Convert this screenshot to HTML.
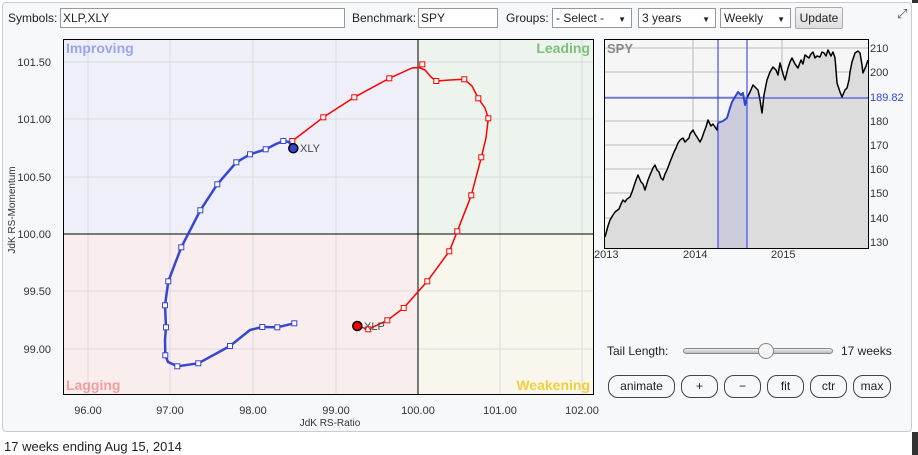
<!DOCTYPE html>
<html><head><meta charset="utf-8"><style>
*{margin:0;padding:0;box-sizing:border-box}
body{width:918px;height:455px;background:#fff;font-family:"Liberation Sans",Arial,sans-serif;position:relative;overflow:hidden;color:#222}
.panel{position:absolute;left:2px;top:2px;width:910px;height:430px;background:#f7f8fa;border:1px solid #ccc;border-radius:4px}
.abs{position:absolute;font-size:12px}
.inp{position:absolute;height:20px;border:1px solid #999;background:#fff;font-size:12px;padding:2px 2px;line-height:14px}
.sel{position:absolute;height:20px;border:1px solid #999;background:#fff;font-size:12px;padding:2px 3px;line-height:14px}
.sel:after{content:"▼";position:absolute;right:5px;top:4px;font-size:8px}
.btn{position:absolute;top:375px;height:23px;border:1px solid #444;border-radius:10px;background:#f7f8fa;font-size:12px;text-align:center;line-height:21px}
</style></head><body>
<div class="panel"></div>
<div style="position:absolute;right:0;top:0;width:6px;height:3px;background:#333"></div>
<div style="position:absolute;left:912px;top:432px;width:6px;height:23px;background:#333"></div>
<div class="abs" style="left:8px;top:11px">Symbols:</div>
<div class="inp" style="left:60px;top:8px;width:285px">XLP,XLY</div>
<div class="abs" style="left:352px;top:11px">Benchmark:</div>
<div class="inp" style="left:418px;top:8px;width:80px">SPY</div>
<div class="abs" style="left:506px;top:11px">Groups:</div>
<div class="sel" style="left:552px;top:8px;width:80px">- Select -</div>
<div class="sel" style="left:638px;top:8px;width:78px">3 years</div>
<div class="sel" style="left:720px;top:8px;width:71px">Weekly</div>
<div style="position:absolute;left:795px;top:7px;width:48px;height:22px;border:1px solid #aaa;border-radius:2px;background:linear-gradient(#f4f4f4,#ddd);font-size:12px;text-align:center;line-height:20px">Update</div>
<div class="abs" style="left:897px;top:6px;font-size:13px;color:#555">⤢</div>

<svg width="918" height="455" style="position:absolute;left:0;top:0" font-family="Liberation Sans,Arial,sans-serif">
<rect x="63" y="39" width="355" height="195" fill="#eeeff8"/>
<rect x="418" y="39" width="175" height="195" fill="#edf4ed"/>
<rect x="63" y="234" width="355" height="160" fill="#f9eded"/>
<rect x="418" y="234" width="175" height="160" fill="#f9f6ee"/>
<g stroke="#dcdcdc" stroke-width="1">
<line x1="88" y1="39" x2="88" y2="394"/><line x1="170" y1="39" x2="170" y2="394"/><line x1="253" y1="39" x2="253" y2="394"/><line x1="336" y1="39" x2="336" y2="394"/><line x1="500" y1="39" x2="500" y2="394"/><line x1="582" y1="39" x2="582" y2="394"/>
<line x1="63" y1="62" x2="593" y2="62"/><line x1="63" y1="119" x2="593" y2="119"/><line x1="63" y1="177" x2="593" y2="177"/><line x1="63" y1="291" x2="593" y2="291"/><line x1="63" y1="349" x2="593" y2="349"/>
</g>
<line x1="418" y1="39" x2="418" y2="394" stroke="#000"/>
<line x1="63" y1="234" x2="593" y2="234" stroke="#000"/>
<rect x="63.5" y="39.5" width="530" height="355" fill="none" stroke="#000"/>
<g font-size="14" font-weight="bold">
<text x="66" y="53" fill="#9aa6e8">Improving</text>
<text x="590" y="53" fill="#7cc07c" text-anchor="end">Leading</text>
<text x="66" y="390" fill="#f59c9c">Lagging</text>
<text x="590" y="390" fill="#f2cf3a" text-anchor="end">Weakening</text>
</g>
<g font-size="11" fill="#333" text-anchor="end">
<text x="51" y="66">101.50</text><text x="51" y="123">101.00</text><text x="51" y="181">100.50</text><text x="51" y="238">100.00</text><text x="51" y="295">99.50</text><text x="51" y="353">99.00</text>
</g>
<g font-size="11" fill="#333" text-anchor="middle">
<text x="88" y="414">96.00</text><text x="170" y="414">97.00</text><text x="253" y="414">98.00</text><text x="336" y="414">99.00</text><text x="418" y="414">100.00</text><text x="500" y="414">101.00</text><text x="582" y="414">102.00</text>
<text x="330" y="426" font-size="10">JdK RS-Ratio</text>
<text transform="translate(15,210) rotate(-90)" font-size="10">JdK RS-Momentum</text>
</g>
<polyline fill="none" stroke="#f00" stroke-width="1.5" stroke-linejoin="round" points="292.3,141 323.3,117.3 354.3,97.3 389.3,78.3 412,68 419,67.5 425,70 431,77 436.3,81 450,80 464.3,79.3 472,86 478.3,98.3 485,108 488.3,118.3 486,138 481.3,157.3 471.3,195.3 457.3,231.3 449.3,251.3 427.3,281.3 403.7,308 387.3,320.3 368.3,329.3 357.3,326"/>
<g fill="#fff" stroke="#f00" stroke-width="1">
<rect x="289.8" y="138.5" width="5" height="5"/><rect x="320.8" y="114.8" width="5" height="5"/><rect x="351.8" y="94.8" width="5" height="5"/><rect x="386.8" y="75.8" width="5" height="5"/><rect x="419.8" y="61.8" width="5" height="5"/><rect x="433.8" y="78.5" width="5" height="5"/><rect x="461.8" y="76.8" width="5" height="5"/><rect x="475.8" y="95.8" width="5" height="5"/><rect x="485.8" y="115.8" width="5" height="5"/><rect x="478.8" y="154.8" width="5" height="5"/><rect x="468.8" y="192.8" width="5" height="5"/><rect x="454.8" y="228.8" width="5" height="5"/><rect x="446.8" y="248.8" width="5" height="5"/><rect x="424.8" y="278.8" width="5" height="5"/><rect x="401.2" y="305.5" width="5" height="5"/><rect x="384.8" y="317.8" width="5" height="5"/><rect x="365.8" y="326.8" width="5" height="5"/>
</g>
<polyline fill="none" stroke="#3447d4" stroke-width="2.5" stroke-linejoin="round" points="294.3,323.3 277.3,327.3 262.3,327 250,330 230,346 198.3,363.3 177.3,366.3 168,362 165.3,355.3 165,340 166,327.3 165,305.3 168.3,281.3 181.3,247.3 200.3,210.3 217.3,184.3 236.3,162.3 250,154.3 265.7,149.3 276,144 283.3,141 289,142 293.3,148.3"/>
<g fill="#fff" stroke="#3447d4" stroke-width="1">
<rect x="291.8" y="320.8" width="5" height="5"/><rect x="274.8" y="324.8" width="5" height="5"/><rect x="259.8" y="324.5" width="5" height="5"/><rect x="227.5" y="343.5" width="5" height="5"/><rect x="195.8" y="360.8" width="5" height="5"/><rect x="174.8" y="363.8" width="5" height="5"/><rect x="162.8" y="352.8" width="5" height="5"/><rect x="163.5" y="324.8" width="5" height="5"/><rect x="162.5" y="302.8" width="5" height="5"/><rect x="165.8" y="278.8" width="5" height="5"/><rect x="178.8" y="244.8" width="5" height="5"/><rect x="197.8" y="207.8" width="5" height="5"/><rect x="214.8" y="181.8" width="5" height="5"/><rect x="233.8" y="159.8" width="5" height="5"/><rect x="247.5" y="151.8" width="5" height="5"/><rect x="263.2" y="146.8" width="5" height="5"/><rect x="280.8" y="138.5" width="5" height="5"/>
</g>
<circle cx="293.3" cy="148.3" r="4.5" fill="#3447d4" stroke="#000" stroke-width="1.5"/>
<circle cx="357.3" cy="326" r="4.5" fill="#f00" stroke="#000" stroke-width="1.5"/>
<text x="300" y="152" font-size="11" fill="#444">XLY</text>
<text x="364" y="330" font-size="11" fill="#444">XLP</text>

<!-- SPY chart -->
<rect x="604" y="39" width="264" height="209" fill="#f6f6f6"/>
<g stroke="#bbb"><line x1="693" y1="39" x2="693" y2="248"/><line x1="782" y1="39" x2="782" y2="248"/>
<line x1="604" y1="48" x2="868" y2="48"/><line x1="604" y1="72" x2="868" y2="72"/><line x1="604" y1="97" x2="868" y2="97"/><line x1="604" y1="121" x2="868" y2="121"/><line x1="604" y1="145" x2="868" y2="145"/><line x1="604" y1="169" x2="868" y2="169"/><line x1="604" y1="193" x2="868" y2="193"/><line x1="604" y1="218" x2="868" y2="218"/><line x1="604" y1="242" x2="868" y2="242"/></g>
<polygon fill="#dcdcdc" points="605,248 605,237 610,220 615,212 619,209 623,200 627,199 630,197 634,186 638,175 641,182 645,190 650,175 655,165 659,172 663,180 667,170 670,162 674,152 678,143 683,138 687,140 690,134 693,130 697,137 700,142 704,132 708,120 711,126 715,127 718,123 723,121 727,118 730,108 732,102 735,97 738,92 741,95 743,93 745,105 747,98 750,92 753,85 756,88 758,90 760,100 762,113 764,95 767,80 770,72 773,67 776,70 780,63 783,74 785,80 788,68 792,58 795,64 798,68 801,60 805,55 809,58 813,52 817,56 820,57 824,53 828,50 831,56 835,58 836,70 837,83 840,92 842,97 845,90 847,88 849,80 850,72 852,62 855,53 858,51 860,53 862,65 863,73 866,66 868,60 868,248"/>
<polygon fill="#ccccdd" points="718,248 718,123 723,121 727,118 730,108 732,102 735,97 738,92 741,95 743,93 745,105 747,98 747,248"/>
<polyline fill="none" stroke="#000" stroke-width="1.5" stroke-linejoin="round" points="605,237 608,226 610,220 613,215 615,212 619,209 621,204 623,200 625,202 627,199 630,197 632,192 634,186 636,180 638,175 641,182 643,184 645,190 648,180 650,175 653,168 655,165 657,170 659,172 661,178 663,180 665,174 667,170 670,162 672,157 674,152 676,148 678,143 680,140 683,138 685,142 687,140 689,138 690,134 693,130 695,134 697,137 700,142 702,138 704,132 706,127 708,120 711,126 713,124 715,127 717,130 718,123"/>
<polyline fill="none" stroke="#3447d4" stroke-width="2" stroke-linejoin="round" points="718,123 723,121 727,118 730,108 732,102 735,97 738,92 741,95 743,93 745,105 747,98"/>
<polyline fill="none" stroke="#000" stroke-width="1.5" stroke-linejoin="round" points="747,98 750,92 753,85 756,88 758,90 760,100 762,113 764,95 767,80 770,72 773,67 776,70 778,75 780,63 783,74 785,80 788,68 790,62 792,58 795,64 798,68 801,60 803,64 805,55 809,58 811,54 813,52 815,58 817,56 820,57 822,52 824,53 826,56 828,50 831,56 833,52 835,58 836,70 837,83 840,92 842,97 845,90 847,88 849,80 850,72 852,62 855,53 858,51 860,53 862,65 863,73 866,66 868,60"/>
<g stroke="#2233ee" stroke-width="1"><line x1="718" y1="39" x2="718" y2="248"/><line x1="747" y1="39" x2="747" y2="248"/><line x1="604" y1="98" x2="868" y2="98"/></g>
<rect x="604.5" y="39.5" width="264" height="209" fill="none" stroke="#000"/>
<text x="607" y="53" font-size="13" font-weight="bold" fill="#888">SPY</text>
<g font-size="11" fill="#333">
<text x="870" y="52">210</text><text x="870" y="76">200</text><text x="870" y="101" fill="#3447d4">189.82</text><text x="870" y="125">180</text><text x="870" y="149">170</text><text x="870" y="173">160</text><text x="870" y="197">150</text><text x="870" y="222">140</text><text x="870" y="246">130</text>
<text x="594" y="258">2013</text><text x="683" y="258">2014</text><text x="771" y="258">2015</text>
</g>
</svg>

<div class="abs" style="left:607px;top:344px;font-size:12px">Tail Length:</div>
<div style="position:absolute;left:683px;top:348px;width:150px;height:6px;border:1px solid #888;border-radius:3px;background:linear-gradient(#eee,#bbb)"></div>
<div style="position:absolute;left:758px;top:343px;width:16px;height:16px;border:1px solid #888;border-radius:50%;background:#f4f4f4"></div>
<div class="abs" style="left:841px;top:344px;font-size:12px">17 weeks</div>
<div class="btn" style="left:608px;width:67px">animate</div>
<div class="btn" style="left:681px;width:37px">+</div>
<div class="btn" style="left:724px;width:37px">−</div>
<div class="btn" style="left:767px;width:37px">fit</div>
<div class="btn" style="left:810px;width:37px">ctr</div>
<div class="btn" style="left:853px;width:38px">max</div>
<div class="abs" style="left:4px;top:439px;font-size:13px">17 weeks ending Aug 15, 2014</div>
</body></html>
